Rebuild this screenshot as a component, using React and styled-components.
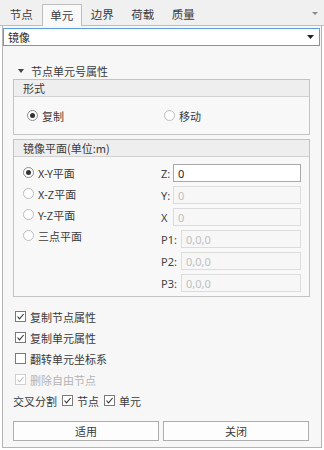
import React from "react";
import styled, { createGlobalStyle } from "styled-components";

const Global = createGlobalStyle`
  html, body { margin: 0; padding: 0; background: #ffffff; }
  body { font-family: "Noto Sans CJK SC", "Noto Sans", sans-serif; font-size: 11px; color: #3a3a3a; }
  * { box-sizing: border-box; }
`;

const Frame = styled.div`
  width: 324px;
  height: 450px;
  display: flex;
  flex-direction: column;
  background: #ffffff;
`;

const TabBar = styled.div`
  height: 26px;
  display: flex;
  align-items: flex-end;
  background: #f0f0f0;
  border-bottom: 1px solid #bdbdbd;
  padding-left: 1px;
`;

const Tab = styled.div`
  width: 40.5px;
  height: ${(p) => (p.$active ? "22px" : "21px")};
  display: flex;
  align-items: center;
  justify-content: center;
  font-size: 11.5px;
  color: #3a3a3a;
  background: ${(p) => (p.$active ? "#f9f9f9" : "transparent")};
  border: 1px solid ${(p) => (p.$active ? "#bdbdbd" : "transparent")};
  border-bottom: none;
  margin-bottom: ${(p) => (p.$active ? "-1px" : "0")};
  padding-bottom: 2px;
`;

const TabMenu = styled.div`
  margin-left: auto;
  margin-right: 6px;
  align-self: center;
  display: flex;
  padding-top: 2px;
`;

const Panel = styled.div`
  flex: none;
  height: 422px;
  margin: 0 2px 0 2px;
  background: #f7f7f7;
  border: 1px solid #b4b4b4;
  border-top: none;
  display: flex;
  flex-direction: column;
`;

const Combo = styled.div`
  margin: 2px 1px 0 0;
  height: 18px;
  border: 1px solid #5a9fd8;
  background: #ffffff;
  display: flex;
  align-items: center;
  padding: 0 5px 0 4px;
  color: #2a2a2a;
`;

const ComboArrow = styled.span`
  margin-left: auto;
  display: flex;
`;

const Inner = styled.div`
  padding: 0 11px 0 10px;
  display: flex;
  flex-direction: column;
`;

const SectionHead = styled.div`
  height: 16px;
  margin-top: 17px;
  display: flex;
  align-items: center;
  gap: 7px;
  padding-left: 5px;
`;

const Group = styled.div`
  border: 1px solid #c4c4c4;
  background: #f8f8f8;
  margin-top: ${(p) => p.$mt || 0}px;
  display: flex;
  flex-direction: column;
`;

const GroupHead = styled.div`
  height: 17px;
  background: #eeeeee;
  border-bottom: 1px solid #d0d0d0;
  display: flex;
  align-items: center;
  padding-left: 9px;
`;

const GroupBody = styled.div`
  height: ${(p) => p.$h}px;
  display: ${(p) => (p.$grid ? "grid" : "flex")};
  grid-template-columns: 138px 1fr;
  align-items: ${(p) => (p.$grid ? "start" : "center")};
  padding: ${(p) => (p.$grid ? "7px 8px 0 9px" : "0 0 0 13px")};
`;

const RadioItem = styled.label`
  display: flex;
  align-items: center;
  gap: 4px;
  height: 21px;
  width: ${(p) => p.$w || "auto"};
`;

const RadioDot = styled.span`
  width: 11px;
  height: 11px;
  border-radius: 50%;
  border: 1px solid ${(p) => (p.$on ? "#8a8a8a" : "#bcbcbc")};
  background: #ffffff;
  display: flex;
  align-items: center;
  justify-content: center;
  &::after {
    content: "";
    width: 5px;
    height: 5px;
    border-radius: 50%;
    background: ${(p) => (p.$on ? "#333" : "transparent")};
  }
`;

const RadioCol = styled.div`
  display: flex;
  flex-direction: column;
  margin-top: -2px;
`;

const FieldCol = styled.div`
  display: flex;
  flex-direction: column;
  gap: 4px;
`;

const FieldRow = styled.div`
  display: flex;
  align-items: center;
  height: 18px;
`;

const FieldLabel = styled.span`
  width: ${(p) => p.$w}px;
  flex: none;
  color: #444;
  font-family: "Noto Sans", "Noto Sans CJK SC", sans-serif;
  font-size: 11px;
`;

const Input = styled.div`
  flex: 1;
  height: 18px;
  border: 1px solid ${(p) => (p.$off ? "#dcdcdc" : "#a8a8a8")};
  background: ${(p) => (p.$off ? "#f7f7f7" : "#ffffff")};
  color: ${(p) => (p.$off ? "#c0c0c0" : "#222")};
  display: flex;
  align-items: center;
  padding-left: 4px;
  font-family: "Noto Sans", sans-serif;
  font-size: 11px;
`;

const Checks = styled.div`
  margin-top: 9px;
  display: flex;
  flex-direction: column;
`;

const CheckRow = styled.div`
  height: 21px;
  display: flex;
  align-items: center;
  gap: 4px;
  padding-left: ${(p) => (p.$pad ? "2px" : "0")};
  color: ${(p) => (p.$off ? "#b4b4b4" : "inherit")};
`;

const BoxWrap = styled.span`
  width: 11px;
  height: 11px;
  flex: none;
  border: 1px solid ${(p) => (p.$off ? "#cfcfcf" : "#7a7a7a")};
  background: #ffffff;
  display: flex;
  align-items: center;
  justify-content: center;
  margin-left: ${(p) => p.$ml || 0}px;
`;

const Buttons = styled.div`
  margin-top: 10px;
  display: grid;
  grid-template-columns: 146px 146px;
  gap: 4px;
`;

const Button = styled.div`
  height: 20px;
  border: 1px solid #adadad;
  background: #fdfdfd;
  display: flex;
  align-items: center;
  justify-content: center;
`;

const Tri = ({ color = "#222", w = 7, h = 4 }) => (
  <svg width={w} height={h} viewBox={`0 0 ${w} ${h}`}>
    <polygon points={`0,0 ${w},0 ${w / 2},${h}`} fill={color} />
  </svg>
);

const Radio = ({ on, children, w }) => (
  <RadioItem $w={w}>
    <RadioDot $on={on} />
    <span>{children}</span>
  </RadioItem>
);

const Box = ({ off, ml }) => (
  <BoxWrap $off={off} $ml={ml}>
    <svg width="9" height="9" viewBox="0 0 9 9">
      <polyline
        points="1.5,4.5 3.5,6.8 7.6,2"
        fill="none"
        stroke={off ? "#c0c0c0" : "#333"}
        strokeWidth="1.1"
      />
    </svg>
  </BoxWrap>
);

const EmptyBox = () => <BoxWrap />;

export default function App() {
  const tabs = ["节点", "单元", "边界", "荷载", "质量"];
  return (
    <>
      <Global />
      <Frame>
        <TabBar>
          {tabs.map((t) => (
            <Tab key={t} $active={t === "单元"}>
              {t}
            </Tab>
          ))}
          <TabMenu>
            <Tri color="#888" w={6} h={3} />
          </TabMenu>
        </TabBar>
        <Panel>
          <Combo>
            镜像
            <ComboArrow>
              <Tri color="#222" w={7} h={4} />
            </ComboArrow>
          </Combo>
          <Inner>
            <SectionHead>
              <Tri color="#444" w={6} h={4} />
              <span>节点单元号属性</span>
            </SectionHead>
            <Group>
              <GroupHead>形式</GroupHead>
              <GroupBody $h={37}>
                <Radio on w="137px">复制</Radio>
                <Radio>移动</Radio>
              </GroupBody>
            </Group>
            <Group $mt={4}>
              <GroupHead>镜像平面(单位:m)</GroupHead>
              <GroupBody $h={139} $grid>
                <RadioCol>
                  <Radio on>X-Y平面</Radio>
                  <Radio>X-Z平面</Radio>
                  <Radio>Y-Z平面</Radio>
                  <Radio>三点平面</Radio>
                </RadioCol>
                <FieldCol>
                  <FieldRow>
                    <FieldLabel $w={12}>Z:</FieldLabel>
                    <Input>0</Input>
                  </FieldRow>
                  <FieldRow>
                    <FieldLabel $w={12}>Y:</FieldLabel>
                    <Input $off>0</Input>
                  </FieldRow>
                  <FieldRow>
                    <FieldLabel $w={12}>X</FieldLabel>
                    <Input $off>0</Input>
                  </FieldRow>
                  <FieldRow>
                    <FieldLabel $w={20}>P1:</FieldLabel>
                    <Input $off>0,0,0</Input>
                  </FieldRow>
                  <FieldRow>
                    <FieldLabel $w={20}>P2:</FieldLabel>
                    <Input $off>0,0,0</Input>
                  </FieldRow>
                  <FieldRow>
                    <FieldLabel $w={20}>P3:</FieldLabel>
                    <Input $off>0,0,0</Input>
                  </FieldRow>
                </FieldCol>
              </GroupBody>
            </Group>
            <Checks>
              <CheckRow $pad>
                <Box />
                <span>复制节点属性</span>
              </CheckRow>
              <CheckRow $pad>
                <Box />
                <span>复制单元属性</span>
              </CheckRow>
              <CheckRow $pad>
                <EmptyBox />
                <span>翻转单元坐标系</span>
              </CheckRow>
              <CheckRow $pad $off>
                <Box off />
                <span>删除自由节点</span>
              </CheckRow>
              <CheckRow>
                <span>交叉分割</span>
                <Box ml={1} />
                <span>节点</span>
                <Box ml={1} />
                <span>单元</span>
              </CheckRow>
            </Checks>
            <Buttons>
              <Button>适用</Button>
              <Button>关闭</Button>
            </Buttons>
          </Inner>
        </Panel>
      </Frame>
    </>
  );
}
